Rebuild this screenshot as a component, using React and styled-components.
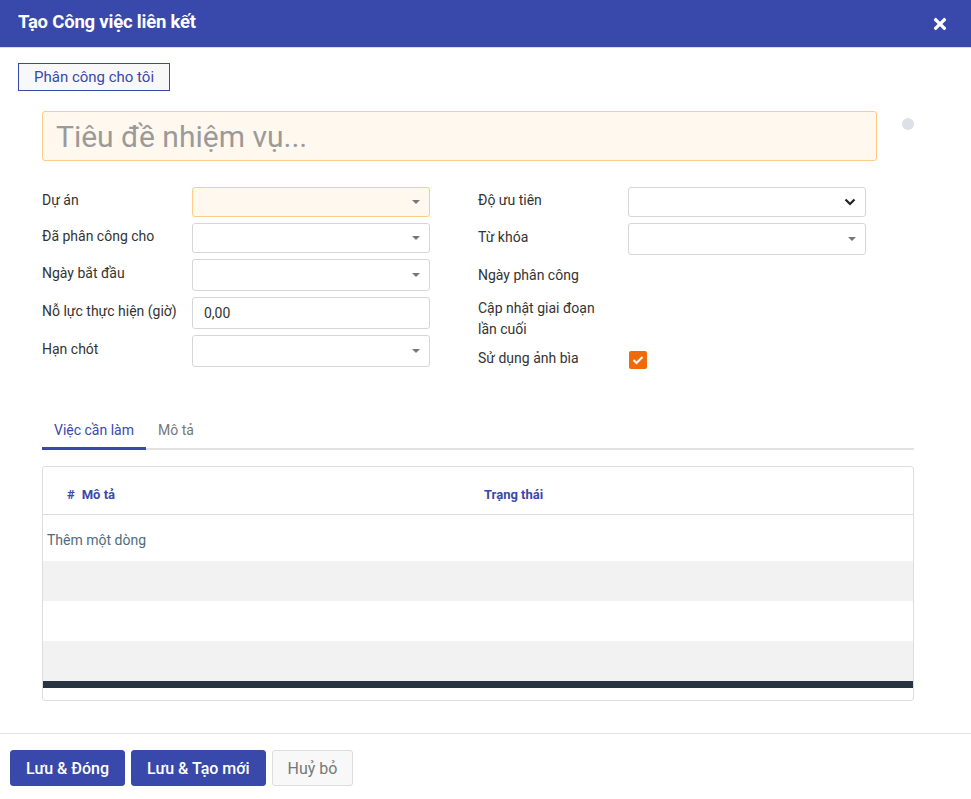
import React from 'react';
import styled, {createGlobalStyle} from "styled-components";
import {FaTimes} from "react-icons/fa";

const brand = "#3949ab"

const leftFields = [
    {label: "Dự án", kind: "select", h: 30, warn: true},
    {label: "Đã phân công cho", kind: "select", h: 30},
    {label: "Ngày bắt đầu", kind: "select", h: 32},
    {label: "Nỗ lực thực hiện (giờ)", kind: "text", h: 32, value: "0,00"},
    {label: "Hạn chót", kind: "select", h: 32},
]

const rightFields = [
    {label: "Độ ưu tiên", kind: "chevron", h: 30},
    {label: "Từ khóa", kind: "select", h: 32},
    {label: "Ngày phân công", kind: "none", h: 32},
    {label: "Cập nhật giai đoạn lần cuối", kind: "none", h: 42},
    {label: "Sử dụng ảnh bìa", kind: "check", h: 26},
]

const Field = ({f}) => (
    <Row h={f.h}>
        <Label>{f.label}</Label>
        {f.kind === "select" && <Input h={f.h} warn={f.warn}><Caret/></Input>}
        {f.kind === "chevron" && <Input h={f.h}>
            <svg width="12" height="8" viewBox="0 0 12 8">
                <path d="M1.5 1.5 L6 6 L10.5 1.5" fill="none" stroke="#222" strokeWidth="2.2"/>
            </svg>
        </Input>}
        {f.kind === "text" && <Input h={f.h}><Value>{f.value}</Value></Input>}
        {f.kind === "check" && <Check>
            <svg width="12" height="10" viewBox="0 0 12 10">
                <path d="M1.5 5 L4.5 8 L10.5 2" fill="none" stroke="#fff" strokeWidth="2"/>
            </svg>
        </Check>}
    </Row>
)

const App = () => {
    return (
        <Dialog>
            <GlobalStyle/>
            <Header>
                <Title>Tạo Công việc liên kết</Title>
                <FaTimes size={18} color="#fff"/>
            </Header>
            <Body>
                <AssignButton>Phân công cho tôi</AssignButton>
                <Sheet>
                    <TitleRow>
                        <TitleInput>Tiêu đề nhiệm vụ...</TitleInput>
                        <Dot/>
                    </TitleRow>
                    <Groups>
                        <Column>{leftFields.map(f => <Field key={f.label} f={f}/>)}</Column>
                        <Column>{rightFields.map(f => <Field key={f.label} f={f}/>)}</Column>
                    </Groups>
                    <Tabs>
                        <Tab active>Việc cần làm</Tab>
                        <Tab>Mô tả</Tab>
                    </Tabs>
                    <Table>
                        <HeadRow>
                            <HeadCell first><Hash>#</Hash>Mô tả</HeadCell>
                            <HeadCell>Trạng thái</HeadCell>
                        </HeadRow>
                        <AddRow>Thêm một dòng</AddRow>
                        <Stripe grey/>
                        <Stripe/>
                        <Stripe grey/>
                        <ScrollBar/>
                    </Table>
                </Sheet>
            </Body>
            <Footer>
                <Button primary>Lưu &amp; Đóng</Button>
                <Button primary>Lưu &amp; Tạo mới</Button>
                <Button>Huỷ bỏ</Button>
            </Footer>
        </Dialog>
    );
};

const GlobalStyle = createGlobalStyle`
body{
margin:0;
background:#fff;
font-family: Roboto, "Noto Sans", sans-serif;
color:#333;
}
`

//-----------Dialog---------
const Dialog = styled.div`
display:flex;
flex-direction:column;
height:799px;
`
const Header = styled.div`
display:flex;
align-items:center;
justify-content:space-between;
height:47px;
padding:0 22px 0 18px;
background:${brand};
border-bottom:1px solid #ddd;
`
const Title = styled.div`
color:#fff;
font-size:18.5px;
font-weight:700;
letter-spacing:-0.2px;
padding-bottom:4px;
`
const Body = styled.div`
flex:1;
padding:15px 18px 0;
`
const AssignButton = styled.button`
height:28px;
padding:0 15px;
border:1px solid ${brand};
background:#f8f8f8;
color:${brand};
font-family:inherit;
font-size:15px;
border-radius:0;
`
const Sheet = styled.div`
padding:20px 39px 0 24px;
`
const TitleRow = styled.div`
display:flex;
align-items:flex-start;
gap:25px;
`
const TitleInput = styled.div`
box-sizing:border-box;
width:835px;
height:50px;
display:flex;
align-items:center;
padding-left:13px;
background:#fff8ee;
border:1px solid #fbcd86;
border-radius:3px;
font-size:30px;
color:#9a9a9a;
`
const Dot = styled.div`
margin-top:7px;
width:12px;
height:12px;
border-radius:50%;
background:#dde0e6;
`

//-----------Fields---------
const Groups = styled.div`
display:grid;
grid-template-columns:388px 388px;
column-gap:48px;
margin-top:26px;
`
const Column = styled.div`
display:flex;
flex-direction:column;
gap:6px;
`
const Row = styled.div`
display:flex;
align-items:center;
height:${p => p.h}px;
`
const Label = styled.div`
width:150px;
margin-top:-3px;
font-size:14px;
line-height:21px;
color:#333;
padding-right:14px;
box-sizing:border-box;
`
const Input = styled.div`
box-sizing:border-box;
width:238px;
height:${p => p.h}px;
display:flex;
align-items:center;
justify-content:flex-end;
padding:0 9px;
border:1px solid ${p => p.warn ? "#fbcd86" : "#d6d6d6"};
background:${p => p.warn ? "#fff8ee" : "#fff"};
border-radius:3px;
`
const Caret = styled.span`
width:0;
height:0;
border-left:4.5px solid transparent;
border-right:4.5px solid transparent;
border-top:4.5px solid #777;
`
const Value = styled.span`
flex:1;
font-size:14px;
color:#333;
padding-left:2px;
`
const Check = styled.div`
width:18px;
height:18px;
margin-left:1px;
border-radius:2px;
background:#f06a0a;
display:flex;
align-items:center;
justify-content:center;
`

//-----------Tabs---------
const Tabs = styled.div`
display:flex;
margin-top:41px;
border-bottom:2px solid #e2e2e2;
`
const Tab = styled.div`
padding:8px 12px 9px;
margin-bottom:-2px;
font-size:14px;
color:${p => p.active ? brand : "#777"};
border-bottom:3px solid ${p => p.active ? brand : "transparent"};
`

//-----------Table---------
const Table = styled.div`
margin-top:16px;
border:1px solid #ddd;
border-radius:3px;
padding-bottom:12px;
`
const HeadRow = styled.div`
display:grid;
grid-template-columns:441px 1fr;
height:48px;
align-items:center;
padding-top:7px;
box-sizing:border-box;
border-bottom:1px solid #ddd;
`
const HeadCell = styled.div`
padding-left:${p => p.first ? "24px" : "0"};
font-size:13px;
font-weight:700;
color:${brand};
`
const Hash = styled.span`
margin-right:7px;
`
const AddRow = styled.div`
height:46px;
box-sizing:border-box;
padding:4px 0 0 4px;
display:flex;
align-items:center;
font-size:14px;
color:#4d6c82;
`
const Stripe = styled.div`
height:40px;
background:${p => p.grey ? "#f2f2f2" : "#fff"};
`
const ScrollBar = styled.div`
height:7px;
background:#263541;
`

//-----------Footer---------
const Footer = styled.div`
display:flex;
gap:6px;
padding:16px 10px 13px;
border-top:1px solid #e2e2e2;
`
const Button = styled.button`
height:36px;
padding:0 15px;
border-radius:3px;
font-family:inherit;
font-size:16px;
font-weight:${p => p.primary ? 500 : 400};
color:${p => p.primary ? "#fff" : "#777"};
background:${p => p.primary ? brand : "#f8f8f8"};
border:1px solid ${p => p.primary ? brand : "#ddd"};
`

export default App;
